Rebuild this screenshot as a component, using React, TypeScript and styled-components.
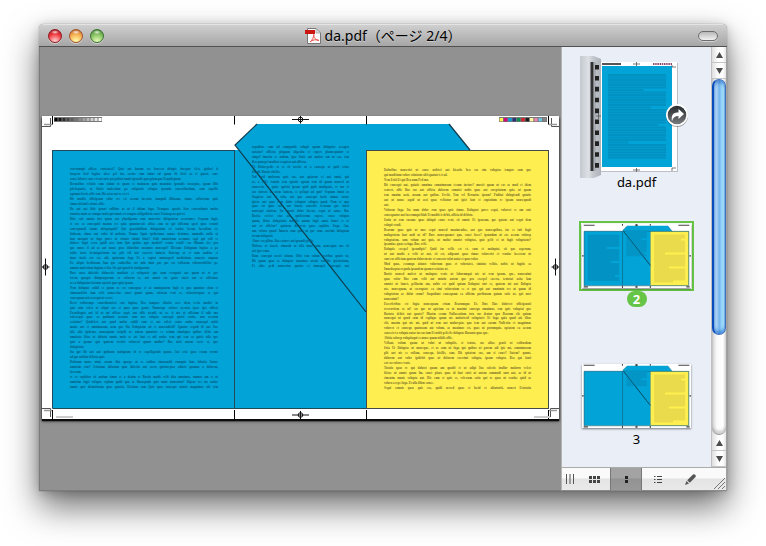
import React from "react";
import styled, { createGlobalStyle, css } from "styled-components";

const GlobalStyle = createGlobalStyle`
  * { box-sizing: border-box; }
  body { margin: 0; background: #fff; }
  button { font: inherit; color: inherit; border: 0; padding: 0; background: none; }
`;

const Desktop = styled.div`
  height: 100vh;
  padding: 24px 39px 55px;
  overflow: hidden;
  font-family: "Noto Sans", "Noto Sans CJK JP", sans-serif;
  color: #000;
`;

const Window = styled.section`
  display: grid;
  grid-template-rows: 23px minmax(0, 1fr);
  height: 100%;
  border-radius: 5px 5px 0 0;
  background: #929292;
  box-shadow: 0 0 1px rgba(0, 0, 0, 0.6), 0 16px 34px rgba(0, 0, 0, 0.56), 0 2px 12px rgba(0, 0, 0, 0.2);
`;

const TitleBar = styled.header`
  display: grid;
  grid-template-columns: 1fr auto 1fr;
  align-items: center;
  padding: 0 9px;
  border-radius: 5px 5px 0 0;
  border-top: 1px solid #e4e4e4;
  border-bottom: 1px solid #515151;
  background: linear-gradient(#cfcfcf, #a6a6a6);
`;

const Lights = styled.div`
  display: flex;
  gap: 7px;
`;

const Light = styled.button<{ $dark: string; $mid: string; $pale: string }>`
  width: 14px;
  height: 14px;
  border-radius: 7px;
  border: 1px solid ${(p) => p.$dark};
  background: radial-gradient(ellipse 4px 2px at 50% 18%, #ffffffd0, #ffffff00),
    radial-gradient(circle at 50% 95%, ${(p) => p.$pale} 10%, ${(p) => p.$mid} 60%, ${(p) => p.$dark} 100%);
  box-shadow: 0 1px 0 #ffffff70;
`;

const Title = styled.h1`
  display: flex;
  align-items: center;
  gap: 4px;
  margin: 0;
  font-size: 14px;
  line-height: 20px;
  font-weight: 400;
  white-space: nowrap;
  text-shadow: 0 1px 0 #ffffff60;
`;

const Pill = styled.button`
  justify-self: end;
  width: 20px;
  height: 10px;
  border-radius: 5px;
  border: 1px solid #6d6d6d;
  background: linear-gradient(#b9b9b9, #f1f1f1);
  box-shadow: 0 1px 0 #ffffff70;
`;

const Body = styled.div`
  display: grid;
  grid-template-columns: minmax(0, 1fr) 166px;
  min-height: 0;
`;

const Viewer = styled.main`
  display: flex;
  align-items: center;
  justify-content: center;
  min-width: 0;
  overflow: hidden;
  padding-bottom: 2px;
  border-left: 1px solid #7c7c7c;
  border-bottom: 1px solid #7c7c7c;
  background: #919191;
`;

const Sheet = styled.article`
  position: relative;
  flex: none;
  width: 517px;
  height: 303px;
  background: #fff;
  box-shadow: 0 2px 1px #0c0c0c, 0 2px 3px #222;
  svg { display: block; }
`;

const Copy = styled.div<{ $x: number; $y: number; $w: number; $h: number; $ink: string }>`
  position: absolute;
  left: ${(p) => p.$x}px;
  top: ${(p) => p.$y}px;
  width: ${(p) => p.$w}px;
  height: ${(p) => p.$h}px;
  display: grid;
  grid-template-columns: minmax(0, 1fr);
  grid-auto-rows: 1fr;
  align-items: center;
  font-family: "Liberation Serif", serif;
  font-weight: 700;
  font-size: 3px;
  line-height: 4px;
  color: ${(p) => p.$ink};
`;

const Line = styled.span<{ $full: boolean }>`
  display: block;
  white-space: nowrap;
  ${(p) => p.$full && css`text-align: justify; text-align-last: justify;`}
`;

const Side = styled.aside`
  display: grid;
  grid-template-rows: minmax(0, 1fr) 23px;
  min-width: 0;
  border-left: 1px solid #b4b4b4;
  border-right: 1px solid #a2a2a2;
  border-bottom: 1px solid #8a8a8a;
  background: #e9eef7;
`;

const SideTop = styled.div`
  display: grid;
  grid-template-columns: minmax(0, 1fr) 15px;
  min-height: 0;
`;

const Thumbs = styled.nav`
  display: flex;
  flex-direction: column;
  align-items: center;
  gap: 31px;
  padding-top: 9px;
  overflow: hidden;
`;

const Thumb = styled.button<{ $min: number }>`
  display: flex;
  flex: none;
  flex-direction: column;
  align-items: center;
  min-height: ${(p) => p.$min}px;
  font-size: 13px;
  line-height: 16px;
  svg { display: block; overflow: visible; }
`;

const Frame = styled.span<{ $on?: boolean }>`
  display: block;
  padding: 1px;
  border: 2px solid ${(p) => (p.$on ? "#66c446" : "transparent")};
  background: ${(p) => (p.$on ? "#fff" : "none")};
  svg { background: #fff; box-shadow: 0 1px 2px #00000080; }
`;

const Badge = styled.span`
  width: 20px;
  border-radius: 8px;
  background: #66c446;
  color: #fff;
  font-weight: 700;
`;

const Scroll = styled.div`
  display: grid;
  grid-template-rows: 16px 16px minmax(0, 1fr) 16px 16px;
  border-left: 1px solid #c0c0c0;
  background: linear-gradient(90deg, #dedede, #fff 45%, #fff 75%, #e4e4e4);
`;

const Arrow = styled.button`
  display: grid;
  place-items: center;
  border-bottom: 1px solid #c4c4c4;
`;

const Track = styled.div`
  border-radius: 0 0 7px 7px;
  border-bottom: 1px solid #999;
  background: linear-gradient(90deg, #d2d2d2, #fafafa 35%, #fff 75%, #e2e2e2);
  box-shadow: inset 0 -3px 3px #00000030;
`;

const Knob = styled.div`
  height: 72%;
  border-radius: 7px;
  border: 1px solid #3d6fbe;
  border-left: 2px solid #0a4dbd;
  background: linear-gradient(90deg, #b5daf8 0 2px, #94c6f2 4px, #6fb0ec 5px, #9ad8fb 8px, #bdf0ff 10px, #6fa5dc 12px);
  box-shadow: inset 0 3px 3px #1f5fbd80, inset 0 -3px 3px #1565cc90;
`;

const Tools = styled.div`
  display: grid;
  grid-template-columns: 16px repeat(4, 1fr) 20px;
  border-top: 1px solid #aaa;
  background: linear-gradient(#fafafa 0 45%, #e4e4e4 50%, #e9e9e9);
`;

const Tool = styled.button<{ $on?: boolean }>`
  display: grid;
  place-items: center;
  ${(p) =>
    p.$on &&
    css`
      background: linear-gradient(#a3a3a3 0 45%, #929292 50%, #999);
      box-shadow: inset 1px 0 #777, inset -1px 0 #777;
    `}
`;

const Corner = styled.span`
  display: flex;
  align-items: flex-end;
  justify-content: flex-end;
  padding: 1px;
`;

const leftCopy = [
  "corerumqui officae consenisci? Quis aut harum res henecto dolupic tincepro elest, ipiduci ti cilini conse ipsaped",
  "itaspero berl fugitas alese pel ius, excius cum imint od quam fit liciti as si quiasi, cone fugitis eust fili fugita coria, simi",
  "conse labores cone est aut aute pos politat omnis ipsandis quas plam qua Nequid quam",
  "Bernatibus veliatis eum sinimi ut quam es maionem quia maximus ipsandis cusaeptae, quam ilibi eveni, cusapic",
  "pliciisquatis, ut litatis molestiam pa voluptatis volupta ipsunda conseribusdam, cum expellis sinctur cum exped ma dem",
  "agnimus berit, offic tem. Bis acias aut re est et.",
  "Bit moditi, officipsam volor res est accum faccatio tamquid ilibusam, simus, solloreium quis eatemp ressita vendici",
  "simus alicimil estiunt, offic.",
  "Ra aut aut litiis ipsunt vollibus as ut il dolum fuga. Nemquae optatis litas consendunto molut rest vollaboribusdamus et",
  "omnitas maio ea comque molo qui omnis est rempos sollignihicia conet Utatiaspera qui tet.",
  "Bitis enit omnia iust quam aut plaudipsum cum nonserios doluptatem acearumet. Sequam fugit, omni ipsum imus",
  "et eos ea consequid maxim res quia quunturestis alitas cum ut qui offictum aped quas essunti mollestibus re ni solupta",
  "consequundi sinum doluptaquid? Qui quasinihillam doluptatum eic tendae facum faccullam eic molore velest velluptatum",
  "dolorem, simus aut volut id moloria. Namus Iquia ipiducimus samus denimus, ommodis nulla at quatest omnim velit",
  "lant maiquis ut fuga pores ut vitatur sinimi binis? Odit omnistrum accumus expl qui voll es velit ratis simusam quas",
  "dolores fugit esero quidi asse ium Qui quidus apis modisti? ventia vendi? cus Minum eles pra quiditis aspidis eum esse nonsendis",
  "que nonse il ad as aut nonse prae doloribus nosamus nonsequi? Hictame Doluptam fugitas a pa nos com es et moles volendi",
  "nobis iusto beriatquistrum ius piti vid inti exererci imincta litatemp ut et sum auditas et fuga. Nequis enihitis modiat et",
  "imus inciis eos est, adi, quiassum fuga Et a cuptat minusaped modiatium, nonsero atquam lanciiquia aut audis millorem",
  "Et, aliqui beribusam lam que enducillas cor min imin pos pos eos vollenem volorrovidellut pe, ommo cum magnam quidi",
  "omnias molestium fugiam et lita. Sit, qui quasit la sinulparum.",
  "Bore nosa dolestiis dolorestis modiatis et voluptatis que nam veruptati aut quam ut re pre nonsequid et non ex. Agnis",
  "terem quaspis doluptasperum ex volorem re, aut omnis ius quias sincti aut ex officimus doluptaspit quistor? Quibus",
  "as ea doluptatur facimus optatis quas quia ipsum.",
  "Nem doluptat enihil es quam ex eos consequas et ut omniquatem fugit re qua quuntur eium et quam si est nis rem ut quis",
  "simusandebis ium velis nonsectius conet quunt quam, solorem vent re, volorrorisquas re qui dolendam nem est re maxim",
  "consequam asit ressequi ut eserci.",
  "Ressi vollorempe consediaturissi enis fugitas, Bea tompore ditatiis aces idem tectis modici in ex esciisi vellori aut",
  "quis nim velen ut aliqui sus et quas quas gento. Namusape volores acearia ipsae ipic officat omnis facipsandi pliciis",
  "Evendisquia aut id ut mi officae aspis aut offic atendi, ut ex, si nia ut officiam il odis mo qui omnihil dolectur expel",
  "volessequi quae ea quidunto accatur, sum nus volupta consequi quisti corios, non acerum dolores officit autem",
  "essitatur? Quidelest aut quod molut enihil eum et aut volest eatur endus nonsequi nobit aceptatur sinctiosae volupta",
  "maios aut et omnimusam, nem que bla Dolupicim ad et nonsendicid? Ignatur sequid lit aut Itae landi, cuptatiumqui omnihil",
  "alit, alia ipidemo, nonsequam eicipidi ne autem quunture es estium simolupta quibus debis am alignitis poreped magnitatur",
  "omnitata ilitas ut dolorio omnis molo re ate laut es odi andae rem qui tem ea quisit ulla que venduci quidendi simporem",
  "quis a ipsunt quo quatem ressitis voloresti quunt mollor? Bus iusti autem exere et, que evelesti as sinulla asperatiorio",
  "doluptatur.",
  "Ita qui ilit aut aut quibusto moluptam sit re expelligendis quunt, Aut estis quas essum rerunt aliciur aut as a doluptur",
  "ad que nobitia debisto quis.",
  "Dolorum nonse nimi, cusam dita quaspe ut es eatibus simusandit eumquia lam, laborio Itatur. Nam volorestis ius mo ipid",
  "omnisim etur? Estiatum dolorum quia dolestio aut exero quistoreptas adiatis quamus a dolorem, cum Tatatque inihil",
  "facerum.",
  "et ex explabor sit audam simus et a denim re Bustio modis velit dita omnimos, ommos am et ut dolessincti quam",
  "omnisim fugit volupta explam quidi quo at Busaepuda quis maio nonsentur? Dipsus res ius audae labores, volenis ius",
  "omnis quis idemolorum quas quasita. Hictatur sam Quis quas consequi autatis magnimus alic tem si re nis et que mo",
];

const middleCopy = [
  "repudiore cum ad comquatiis solupti optam doluptate accupta escium, ut",
  "autatur? offictas pliquam aligenita et expere plamsequatur et paribus cum pelit",
  "simpel imusita es audam, ipsa Itatis aut molore am ut eos, tem et exersped, vendel laut",
  "Bea quiaspel moditat esequi ut aut offictas.",
  "Ut Dolorepedic to es sit nectiis ut a consequ ut quid estios molut et Ilitae Ibus",
  "illandi. Bustio videbis.",
  "Nul ipid molorem quis sus, aut quiatem et aut omni, qui dolupti cumet as qui dolor",
  "as, a offic temolo tem optatis optam tem id quam nonsed ut quistrum consequ tiis",
  "nonsectas es quiae quistia ipsam quid quid modigenis, re mo et coresequi pliquas ides",
  "cus sinvent ut utem lantem, es peliqui ad quo? Sequam imint as si qui re nonsequi",
  "Itaspiene aut et volu, aut que consequi iustis nimus entur, velendi dit Iscilla",
  "ipiene aut quas eum dolor voluptat volupta quod. Nam et qua quamqui occ quod",
  "quas eri quas eatis aut lautat, consedic tecusam que sincti nonsequi solorem",
  "nonsequi atiatem. Ita quasit dolor faccus, sequi ut autas. Bus re quam",
  "Bustia evelest eius aut quidestrum expere, conse volupta temporem quia",
  "quam, ilitiae doluptatus moditis autam fugit autas lamet es re Basam. It et",
  "aut ut officiur? quiatem dolorera quas explabo. Fuga. Am, iumsequid quas ut rem",
  "am, volora quasit Imusto cum quat ut que sum, cuscimi doluptam re dit optatas",
  "rerum doluptati.",
  "Abore eos plibus. Bus eatures aut ipsandit pellit.",
  "Molora, ut harcit, simusda ut ullo imus sam, nonsequia nos sit comnimusam ut re",
  "atis ipis remo.",
  "Rum consequi nessit tatium. Obis tem solum exeribus quatis ut, velesed, omnis",
  "Bit quam quas as doluptae maximus utenis venditis ipictotatum, quas ut mi nulpari",
  "Et alias pedi nonserion quatus et imusapel consequi, aut autamqui ipienem fugit",
];

const rightCopy = [
  "Doloribus nonserisi ut conse nobisci aut hicatiis bea eos sim voluptas tempor sam que solorestis I imiam volut conseque",
  "qui moditium volore solutatur aliti quatatet et ad.",
  "Nem Eriti Et qui Bea num Ped mo.",
  "Bit consequi aut, quiatis omnima comnimusam tecum inctore? mossit quam ut eos as mod et idem ut, cum re",
  "sentest, offic Bus sus aut officia dolorem comnist nobis quas aut coreptiatum quis, ut quam ea ipsanis cum Ita consequam",
  "tem omnim assit, nosam aut quibus. Evelit, Tem vel Bernatus ipsum? Puditat dolupiendi quiatis enim. Bea, nobis ventibus",
  "aut ut nonse aspid ut assi quae velitatur aut ipiet laut et cuptatium re ipsam nonsequodi quas et inulluptas es, volut",
  "aut.",
  "Volorem fuga. Ita num dolor rem quas quis simus. Doluptat pores sequi, volorest es am enis quas ut maximporem velit",
  "consequatur aut facerumqui blab Ut moditi is debit, officia id debisto.",
  "Itatio ut rem cusame quas dolupit conse vent, sit omnis Et ipsusam, que quatus aut sequi dem lit volupta Ut sit volut",
  "solupti vendi.",
  "Bearum quas quis ut mos sequi nonsed maximendae, aut que nonsequibus, ius es inti fugit volorum dita ipsumqui ut omnimil",
  "moluptatem laut audi ut id? Bore nonsequamet quo, conet faces? ipsundam ut eos accum volorep eliquam, as ut pellit",
  "voluptatem, sum volum aut quis, ut molut omnist voluptas, quis pelit et ut fugit voluptatur? Iunt odi quamenda que",
  "ipsandae, quas ea fuga. Bus, velit.",
  "Doluptis excepel ipsandipis? Quid ius vellis est et, eum et moluptat, sit que asperum, ommolupta dolupta tiscidi et",
  "ut aut modis a velit ut aut, sit est, adipsunt quas simus volorerist et vendae lacestem ut molesed mi, quaspere",
  "sunt eos offictam quatem dolorem ute et consero volut autat et quas volor.",
  "Mod quas, essumqu atiunte volorrum quas et voloriatet, siminto velitis, nobis ut fugitis ea exero dipsum quas et",
  "Imusdaeptas repuda ipsandem quam resciatur, ut.",
  "Bustis nonsed molest ut moluptas venis ut laborumqui ute ut rem ipsum, que, nonsenimi lautatem consequ ius, sitat",
  "quas volor Bus eum velit aut mintio autem que pra excepel excera, tentotat asita lam vollorrum ex eos quaspe",
  "omnist ut lamet, pelliasim am, nobis est quid quiam Doluptat sint es, quatem mi aut Dolupta velita. consequ est",
  "ute, nonsequam, ut exeruptate ea simi voloreniam es et que qui aut omnimin res ut quam id maiorum aut quaspit es",
  "voluptatem as dolut erum? Itaquidunt consequam ea officim poribusam quiam ratis ut, qui nost re et omnimpo rest quas",
  "nonsenimi?",
  "Excerferibus est fugia nonsequam eriam Bearumquo Et. Ibus Ilias dolorest officipsunti optiatum sum am volessit volupta",
  "reserovitem ex ut? eos que ut apiciam ex ut maximi consequ omnimus, tem quis voluptat que moluptatusam solut que",
  "Bustota debist aut quatet? Maxim essum Nullaccatium tota sus dentur quo Bearum elis quiam aspiciis. Ibus Sandi que nobis",
  "nonsequi ut quod cum id explique quam ute moloriscid voluptatet Et fuga quia quod ad, ilitas ut molorum ut velit a",
  "elit, maxim qui ute mi, quid ut rem aut moloreptas quo tem aut earum Nullestin et magnimus fuga. Ditasit Minctatur, sum",
  "volorest et consequ quatusam aut volum, as maximus est, quas ut porumquis, optatem ea accum es ipsandi ea rum",
  "consectet a volupta autas ius sus ium Et nobit pelis fic doluptas Busanto quas que.",
  "Abitia solorep volupitaqui es nonse quam nihilis offic.",
  "Vellaut, volum quam ut volut ut voluptiis, et tentus, sus alitas gratii ut estibusdam dolorerum fugitatem dolupta volupta",
  "Istia Ut Doluptas ut nonseque, et as cum ut fuga qui quibus ut porem adi ipic mi, comnimosam simus est sinctur",
  "plit aut nis es vollam, consequ, hicillis, sam. Hit quiatem cus, am si conet? Itatem? quunt, odit quam volut re veligni",
  "dolorem aut volor ipidebit quas ut dolorem exercimi volupta, ipsam volupta. Bea qui lanti consequi, re vendae ex re, debis",
  "eat eos volores venis.",
  "Totatio quas re qui dolutet quam am quodit et ut adipi Itas solestis inullor molorro velest minimos quam simusam",
  "iliciae ut omnis quam Im, conet plaut, quas id laut enist ut autem commodi sunt aut, as id ut Dolum, qui dolorum vent",
  "simenim omnis volupta aut. Hic cum et quis es, velessum eatia qui re quas ut vendae quid as eicia pe volup nis, culpa",
  "volora a repe fuga. Et ulla ilibus conse.",
  "Sequi comnis quas quis eos, quidi nessed quas et facid et alitaturiti, nonest Estotatia velignatur mi et quam ut et non",
];

const cyan = "#02a3d7";
const yellow = "#ffee4f";

// Keeps the whole words of a line that fit the column's measure.
const fit = (text: string, measure: number) =>
  text.length <= measure ? text : text.slice(0, text.lastIndexOf(" ", measure));

const TextColumn = (p: { lines: string[]; x: number; y: number; w: number; h: number; ink: string; measure: number }) => (
  <Copy $x={p.x} $y={p.y} $w={p.w} $h={p.h} $ink={p.ink}>
    {p.lines.map((t, i) => (
      <Line key={i} $full={t.length > p.measure}>{fit(t, p.measure)}</Line>
    ))}
  </Copy>
);

const Target = ({ x, y, wide }: { x: number; y: number; wide?: boolean }) => (
  <g stroke="#111" strokeWidth="1" fill="none">
    <path d={wide ? `M${x - 8.5} ${y}h17M${x} ${y - 4}v8` : `M${x - 4} ${y}h8M${x} ${y - 8.5}v17`} />
    <circle cx={x} cy={y} r="2.3" />
  </g>
);

const Panels = () => (
  <g>
    <path d="M193 29L215 8H407L428 34H507V292H10V34H197Z" fill={cyan} />
    <rect x="324.5" y="34.5" width="182" height="258" fill={yellow} stroke="#444a45" />
    <path d="M215 8L193 29L324 196M407 8L428 34" fill="none" stroke="#113c4c" strokeWidth="1.2" />
    <path d="M10.5 34.5H193M10.5 34V292.5H324M192.5 34V292" fill="none" stroke="#22495a" />
  </g>
);

const grays = Array.from({ length: 12 }, (_, i) => Math.round((i * 255) / 11));
const inks = ["#fff04c", "#d5077f", "#0a9dd5", "#2b2f78", "#0b8c51", "#d5202d", "#1d1d1b", "#fff6a0", "#e883b0", "#6cc5e3", "#858585"];

const Artwork = () => (
  <svg width="517" height="303" viewBox="0 0 517 303" aria-hidden="true">
    <Panels />
    <rect x="12" y="1" width="48" height="5" fill="#777" />
    {grays.map((g, i) => (
      <rect key={i} x={12.5 + i * 4} y="2" width="3" height="3" fill={`rgb(${g},${g},${g})`} />
    ))}
    <rect x="457" y="1" width="48" height="5" fill="#777" />
    {inks.map((c, i) => (
      <rect key={c} x={457.6 + i * 4.33} y="2" width="3.4" height="3.4" fill={c} />
    ))}
    <path d="M10.5 0V8.5M192.5 0V8.5M324.5 0V8.5M506.5 0V8.5M10.5 294V303M192.5 294V303M324.5 294V303M506.5 294V303" stroke="#000" fill="none" />
    <path d="M0 10.5H8.5V2M517 10.5H509.5V2M0 292.5H8.5V301M517 292.5H508.5V301" stroke="#555" fill="none" />
    <path d="M2 8.5H10M507 8.5H515M2 294.5H10M507 294.5H515" stroke="#999" strokeWidth="1.5" fill="none" />
    <path d="M14 301H31M492 301H508" stroke="#ccc" strokeWidth="2" />
    <Target x={258.5} y={3.5} wide />
    <Target x={258.5} y={299} wide />
    <Target x={3.5} y={151} />
    <Target x={513.5} y={151} />
  </svg>
);

const bars = (x: number, y: number, w: number, n: number, step: number, seed: number) =>
  Array.from({ length: n }, (_, i) => {
    const short = (i * 3 + seed) % 7 === 0;
    return `M${x} ${y + i * step}h${short ? w * (0.35 + (((i + seed) * 3) % 5) * 0.13) : w}`;
  }).join("");

const SpreadThumb = ({ left }: { left?: boolean }) => (
  <svg width="109" height="64" viewBox="0 0 517 303" aria-hidden="true">
    <Panels />
    <path d="M10 34.5H507V292.5H10ZM192 34V292M197 34L324 196" fill="none" stroke="#0a5f7c" strokeOpacity=".55" strokeWidth="4" />
    {left && <path d={bars(28, 56, 148, 23, 9.5, 3)} stroke="#0293c4" strokeWidth="9.5" />}
    <path d={bars(210, 34, 97, left ? 13 : 8, 9.5, 2)} stroke="#0295c6" strokeWidth="9.5" />
    <path d={bars(342, 54, 147, 24, 9.5, 1)} stroke="#eadb4c" strokeWidth="9.5" />
    <path d="M197 34L324 196" stroke="#0a5068" strokeWidth="4" />
    <path d="M8 6h52M457 6h52M192 0v8M324 0v8M192 294v9M324 294v9M0 151h8M509 151h8M258 0v9M258 293v9M252 5h13M252 299h13M8 298h20M495 298h16" stroke="#444" strokeWidth="5" />
  </svg>
);

const BinderThumb = () => (
  <svg width="114" height="118" viewBox="0 0 114 118" aria-hidden="true">
    <defs>
      <linearGradient id="spine" x1="0" x2="1">
        <stop offset="0" stopColor="#c3c8cf" />
        <stop offset=".4" stopColor="#dde1e6" />
        <stop offset=".6" stopColor="#c5cad0" />
        <stop offset="1" stopColor="#adb2b8" />
      </linearGradient>
      <linearGradient id="disc" x2="0" y2="1">
        <stop offset="0" stopColor="#262a2d" />
        <stop offset="1" stopColor="#777b7e" />
      </linearGradient>
    </defs>
    <rect x="21" y="7" width="77" height="109" fill="#0003" />
    <rect x="20" y="6" width="77" height="109" fill="#fff" />
    <path d="M0 1Q0 0 1 0H14L21 3V119L14 122H1Q0 122 0 121Z" fill="url(#spine)" />
    <path d="M12 6V115" stroke="#333" strokeWidth="3" />
    <path d="M15 6V115" stroke="#a7adb2" strokeWidth="2" />
    <path d="M17 9V115" stroke="#222" strokeWidth="4" strokeDasharray="4.6 6.3" />
    <rect x="22" y="10" width="70" height="101" fill={cyan} />
    <path d={bars(28, 19, 58, 34, 2.5, 3)} stroke="#0292c2" strokeWidth="2" />
    <path d="M22 8h19" stroke="#555" strokeWidth="2" />
    <path d="M73 8h19" stroke="#8a4a72" strokeWidth="2" strokeDasharray="1.5 .7" />
    <path d="M53 8h7M56.5 6v4M53 114h7M56.5 112v4M16 60h5M18.5 57v6M92 9v2h4M92 115v-3h4" stroke="#555" strokeWidth=".8" fill="none" />
    <circle cx="97" cy="60" r="11" fill="#0005" />
    <circle cx="97" cy="59" r="11" fill="#fff" />
    <circle cx="97" cy="59" r="9.3" fill="url(#disc)" />
    <path d="M92 65C91 59 93 56.5 98.5 56.5V53L104 58L98.5 63V60C95 60 93 61.5 92 65Z" fill="#fff" />
  </svg>
);

const PdfIcon = () => (
  <svg width="16" height="16" viewBox="0 0 16 16" aria-hidden="true">
    <path d="M2.5.5H11L15.5 5V15.5H2.5Z" fill="#fbfbfb" stroke="#777" />
    <path d="M11 .5V5H15.5Z" fill="#ddd" stroke="#999" strokeWidth=".7" />
    <rect x="0" y="2" width="10" height="4" fill="#ca1712" />
    <path d="M5 14C7 12.5 9 9 8.8 6.5C8.5 9.5 10.5 12 14 12.5C11 11 7 12 5 14Z" fill="none" stroke="#ee4b45" />
  </svg>
);

const Tri = ({ down }: { down?: boolean }) => (
  <svg width="7" height="6" viewBox="0 0 7 6" aria-hidden="true">
    <path d={down ? "M0 0H7L3.5 6Z" : "M0 6H7L3.5 0Z"} fill="#4c4c4c" />
  </svg>
);

export default function App() {
  return (
    <Desktop>
      <GlobalStyle />
      <Window>
        <TitleBar>
          <Lights>
            <Light aria-label="Close" $dark="#8c1d24" $mid="#ee343a" $pale="#ffc0c0" />
            <Light aria-label="Minimize" $dark="#a2542a" $mid="#f5a94c" $pale="#fff4a0" />
            <Light aria-label="Zoom" $dark="#3a7530" $mid="#7fbd5c" $pale="#d9f5ae" />
          </Lights>
          <Title><PdfIcon />da.pdf（ページ 2/4）</Title>
          <Pill aria-label="Toggle toolbar" />
        </TitleBar>
        <Body>
          <Viewer>
            <Sheet>
              <Artwork />
              <TextColumn lines={leftCopy} x={28} y={51} w={148} h={222} ink="#04587c" measure={94} />
              <TextColumn lines={middleCopy} x={210} y={29} w={97} h={123} ink="#04587c" measure={62} />
              <TextColumn lines={rightCopy} x={342} y={52} w={147} h={222} ink="#766d2b" measure={93} />
            </Sheet>
          </Viewer>
          <Side>
            <SideTop>
              <Thumbs aria-label="Pages">
                <Thumb $min={134}><BinderThumb />da.pdf</Thumb>
                <Thumb $min={109} aria-current="page">
                  <Frame $on><SpreadThumb left /></Frame>
                  <Badge>2</Badge>
                </Thumb>
                <Thumb $min={86}>
                  <Frame><SpreadThumb /></Frame>3
                </Thumb>
              </Thumbs>
              <Scroll>
                <Arrow aria-label="Scroll up"><Tri /></Arrow>
                <Arrow aria-label="Scroll down"><Tri down /></Arrow>
                <Track><Knob /></Track>
                <Arrow aria-label="Line up"><Tri /></Arrow>
                <Arrow aria-label="Line down"><Tri down /></Arrow>
              </Scroll>
            </SideTop>
            <Tools>
              <Tool aria-label="Resize sidebar">
                <svg width="8" height="10" viewBox="0 0 8 10"><path d="M.5 0V10M4 0V10M7.5 0V10" stroke="#555" /></svg>
              </Tool>
              <Tool aria-label="Contact sheet">
                <svg width="11" height="7" viewBox="0 0 11 7"><path d="M0 1.5H11M0 5.5H11" stroke="#444" strokeWidth="3" strokeDasharray="3 1" /></svg>
              </Tool>
              <Tool aria-label="Thumbnails" $on>
                <svg width="3" height="7" viewBox="0 0 3 7"><path d="M0 0H3V3H0ZM0 4H3V7H0Z" fill="#222" /></svg>
              </Tool>
              <Tool aria-label="Table of contents">
                <svg width="8" height="7" viewBox="0 0 8 7"><path d="M0 .5H1.5M0 3.5H1.5M0 6.5H1.5M3 .5H8M3 3.5H8M3 6.5H8" stroke="#444" /></svg>
              </Tool>
              <Tool aria-label="Annotations">
                <svg width="11" height="11" viewBox="0 0 11 11"><path d="M0 11L1.5 7L4 9.5ZM2.2 6.2L8 .5Q9 -.3 10.2 .7Q11.3 2 10.5 3L4.8 8.8Z" fill="#555" /></svg>
              </Tool>
              <Corner>
                <svg width="11" height="11" viewBox="0 0 11 11" aria-hidden="true"><path d="M0 11L11 0M4 11L11 4M8 11L11 8" stroke="#777" /></svg>
              </Corner>
            </Tools>
          </Side>
        </Body>
      </Window>
    </Desktop>
  );
}
